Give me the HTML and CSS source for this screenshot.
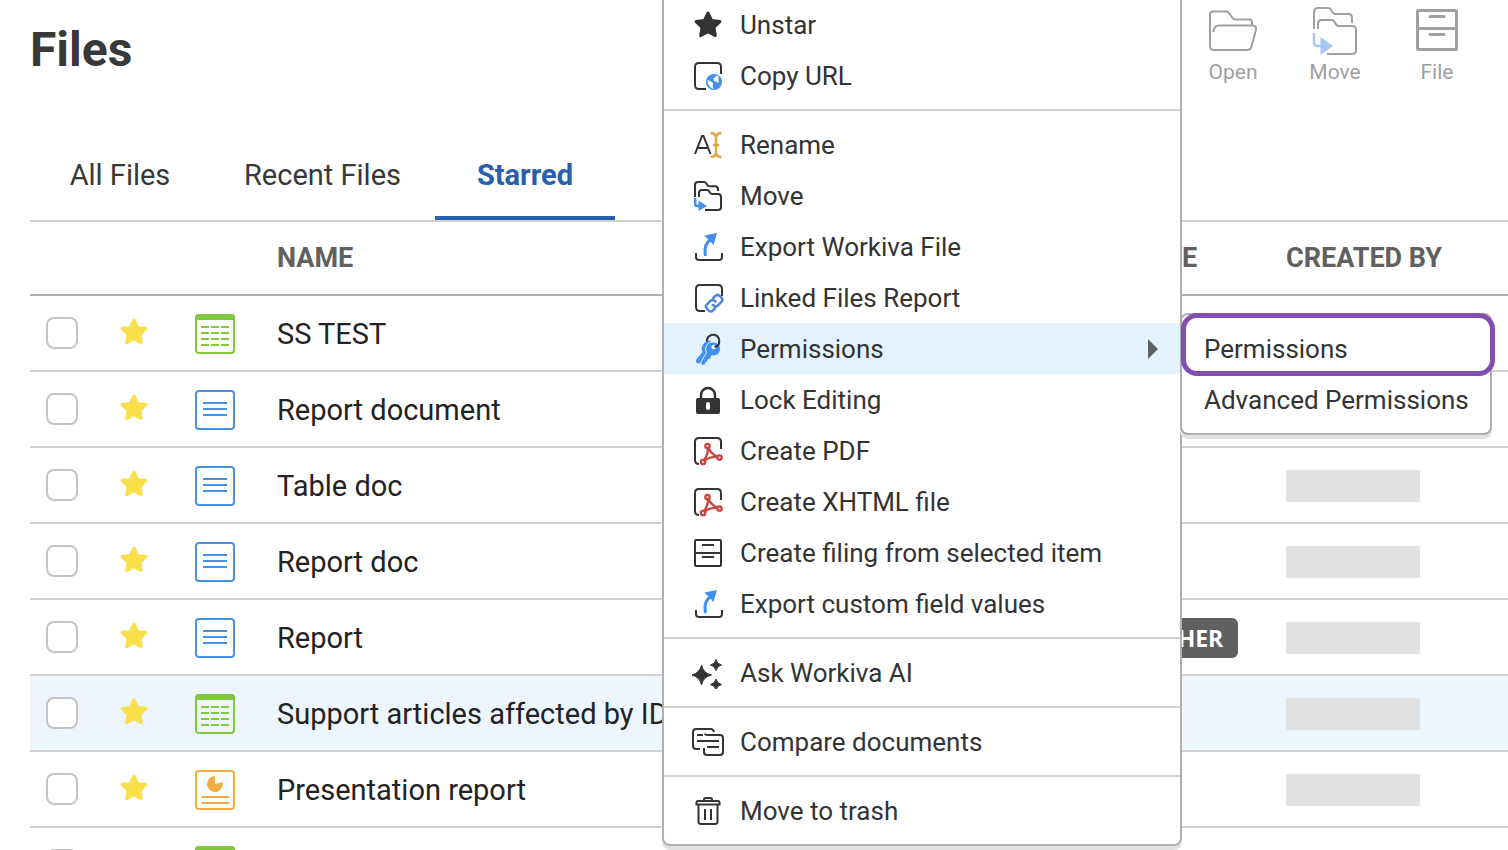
FILE: index.html
```html
<!DOCTYPE html>
<html lang="en">

<head>
  <meta charset="UTF-8">
  <meta name="viewport" content="width=device-width, initial-scale=1.0">
  <title>Files</title>
  <link rel="stylesheet" href="styles.css">
</head>
<body>

<!-- Icon set -->
<svg class="sprite" aria-hidden="true">
  <symbol id="star" viewBox="0 0 32 32">
    <path d="M16 4l3.600 7.500 8.300 1.100-6 5.800 1.450 8.200L16 22.700l-7.350 3.900 1.450-8.200-6-5.800 8.300-1.100z" fill="currentColor" stroke="currentColor" stroke-width="3" stroke-linejoin="round"/>
  </symbol>
  <symbol id="sheet" viewBox="0 0 40 40">
    <rect x="1" y="1" width="38" height="38" rx="3" fill="none" stroke="#80c83c" stroke-width="2"/>
    <path d="M0 6V3.500Q0 0 3.500 0h33Q40 0 40 3.500V6z" fill="#80c83c"/>
    <path d="M6 13h28M6 19h28M6 25h28M6 31h28" stroke="#80c83c" stroke-width="2" stroke-dasharray="8 2"/>
  </symbol>
  <symbol id="doc" viewBox="0 0 40 40">
    <rect x="1" y="1" width="38" height="38" rx="3" fill="none" stroke="#4a90e2" stroke-width="2"/>
    <path d="M8 13h24M8 19h24M8 25h24" stroke="#4a90e2" stroke-width="2"/>
  </symbol>
  <symbol id="slides" viewBox="0 0 40 40">
    <rect x="1" y="1" width="38" height="38" rx="3" fill="none" stroke="#eeae42" stroke-width="2"/>
    <path d="M20 14V6a8 8 0 1 0 7.700 6z" fill="#eeae42"/>
    <path d="M6 27h28M6 33h28" stroke="#eeae42" stroke-width="2"/>
  </symbol>
  <symbol id="open" viewBox="0 0 52 52">
    <path d="M45 21v-2.500q0-3-3-3H28.500q-2 0-3.500-2.200l-3-4.300Q21 7.500 19 7.500H6q-3 0-3 3V42q0 4 4 4h33q3.500 0 4.500-3.500l4.500-17q.500-4-3.500-4H12q-5 0-5.500 6.500" fill="none" stroke="currentColor" stroke-width="2"/>
  </symbol>
  <symbol id="move-big" viewBox="0 0 52 52">
    <path d="M5 25V8q0-4 4-4h10q2 0 3 1.800l1.500 2.400q1 1.800 3 1.800H39q4 0 4 4v5M9 25v-5q0-4 4-4h9.500q2 0 3 1.800l1.500 2.400q1 1.800 3 1.800H43q4 0 4 4v20q0 4-4 4H18" fill="none" stroke="currentColor" stroke-width="2"/>
    <path d="M5 29v10q0 3 3 3h5" fill="none" stroke="#a6c8f6" stroke-width="2.500"/>
    <path d="M11.500 33v18L24 42z" fill="#a6c8f6"/>
  </symbol>
  <symbol id="cabinet-big" viewBox="0 0 52 52">
    <path d="M7.500 6.500h37q1 0 1 1v37q0 1-1 1h-37q-1 0-1-1v-37q0-1 1-1zM6 24.500h40" fill="none" stroke="currentColor" stroke-width="3"/>
    <path d="M19 12.500h14M19 30.500h14" stroke="currentColor" stroke-width="3" stroke-linecap="round"/>
  </symbol>
  <symbol id="copy-url" viewBox="0 0 32 32">
    <path d="M29 14V7q0-4-4-4H7Q3 3 3 7v18q0 4 4 4h7" fill="none" stroke="currentColor" stroke-width="2"/>
    <circle cx="22" cy="22" r="8" fill="#4290ec"/>
    <path d="M15.500 19.500l3 2 3 1.500-1 2.500 1 3.500-3.500-2-2-3.500zM21.500 18.500l3.500-3 1.500 1v6.500l-2.500-1.500-2-.500z" fill="#fff"/>
  </symbol>
  <symbol id="rename" viewBox="0 0 32 32">
    <path d="M3 25L10 7h1.500l7 18M5.500 19h11" fill="none" stroke="currentColor" stroke-width="2"/>
    <path d="M18.500 4q5 0 5.500 4.500Q24.500 4 29.500 4M18.500 28q5 0 5.500-4.500.500 4.500 5.500 4.500M24 7v18M21 16h6" fill="none" stroke="#e2a646" stroke-width="2.500"/>
  </symbol>
  <symbol id="move" viewBox="0 0 32 32">
    <path d="M3 17V5q0-3 3-3h6q1.500 0 2.200 1.300l1 1.700q.800 1.300 2.300 1.300H23q3 0 3 3V11M7 17v-4q0-3 3-3h5q1.500 0 2.200 1.300l.800 1.400q.800 1.300 2.300 1.300H26q3 0 3 3v10q0 3-3 3H13" fill="none" stroke="currentColor" stroke-width="2"/>
    <path d="M3.200 18v6q0 2 2 2H9" fill="none" stroke="#4290ec" stroke-width="2.500"/>
    <path d="M6.500 20.500v10.500L15 26z" fill="#4290ec"/>
  </symbol>
  <symbol id="export" viewBox="0 0 32 32">
    <path d="M4 22v4q0 3 3 3h20q3 0 3-3v-4" fill="none" stroke="currentColor" stroke-width="2"/>
    <path d="M13.500 25C12 16 14 12 19 8" fill="none" stroke="#4290ec" stroke-width="3"/>
    <path d="M12.500 4.500L25 2l-3.500 12z" fill="#4290ec"/>
  </symbol>
  <symbol id="linked" viewBox="0 0 32 32">
    <path d="M30 14V7q0-4-4-4H8Q4 3 4 7v18q0 4 4 4h5" fill="none" stroke="currentColor" stroke-width="2"/>
    <g transform="rotate(-45 22 21)" fill="none" stroke="#4a86dc" stroke-width="2.500">
      <path d="M20 25.500h-4q-3 0-3-3v-2.500q0-3 3-3h5q3 0 3 3v2M24 17h4q3 0 3 3v2.500q0 3-3 3h-5q-3 0-3-3v-2"/>
    </g>
  </symbol>
  <symbol id="keys" viewBox="0 0 32 32">
    <path d="M15 9a6.200 6.200 0 1 1 11.500 2" fill="none" stroke="currentColor" stroke-width="2"/>
    <path d="M19 7.500Q12 8 10 13.500q-1 3 .500 5.500L4 27l.500 3 4 .500 2-4 5-8z" fill="#4290ec"/>
    <path d="M21.500 9a7 7 0 1 1-2 13.700L18.500 26l-2.500.500-.500 2.500-2 .500-.500 2.500-2.500.500L8.500 30l6-10.500A7 7 0 0 1 21.500 9z" fill="#4290ec" stroke="#e4f2fd" stroke-width="1"/>
    <circle cx="21.700" cy="14" r="2.300" fill="#e4f2fd"/>
    <path d="M22.500 13.800q4-.300 4.800-4.300" fill="none" stroke="currentColor" stroke-width="2"/>
  </symbol>
  <symbol id="lock" viewBox="0 0 32 32">
    <path d="M9 15v-4a7 7 0 0 1 14 0v4" fill="none" stroke="currentColor" stroke-width="2.500"/>
    <path d="M4 16q0-2 2-2h20q2 0 2 2v12q0 2-2 2H6q-2 0-2-2z" fill="currentColor"/>
    <rect x="14" y="18" width="4" height="8" rx="2" fill="#fff"/>
  </symbol>
  <symbol id="pdf" viewBox="0 0 32 32">
    <path d="M29 14V7q0-4-4-4H7Q3 3 3 7v18q0 4 4 4" fill="none" stroke="currentColor" stroke-width="2"/>
    <g fill="none" stroke="#c8443c" stroke-width="2.300">
      <circle cx="15.500" cy="11" r="2.200"/>
      <circle cx="11" cy="27" r="2.200"/>
      <circle cx="27.500" cy="22.500" r="2.200"/>
      <path d="M16 13q0 7-4 12M16.500 13q3 6.500 9 8.500M13 25.500q5-4 12.500-3.500"/>
    </g>
  </symbol>
  <symbol id="cabinet" viewBox="0 0 32 32">
    <rect x="3" y="3" width="26" height="26" rx="1" fill="none" stroke="currentColor" stroke-width="2"/>
    <path d="M3 16h26M10 8h12M10 20h12" stroke="currentColor" stroke-width="2"/>
  </symbol>
  <symbol id="sparkle" viewBox="0 0 32 32">
    <path d="M9.500 8Q11 16 19.500 18 11 20 9.500 28 8 20-.500 18 8 16 9.500 8zM24 2.500q1 4.500 5.500 5.500-4.500 1-5.500 5.500-1-4.500-5.500-5.500 4.500-1 5.500-5.500zM24 22q1 4.500 5.500 5.500Q25 28.500 24 33q-1-4.500-5.500-5.500Q23 26.500 24 22z" fill="currentColor" stroke="currentColor" stroke-width="1" stroke-linejoin="round"/>
  </symbol>
  <symbol id="compare" viewBox="0 0 32 32">
    <path d="M8 23H4q-3 0-3-3V6q0-3 3-3h15q2 0 3 3M12 22v4q0 3 3 3h13q3 0 3-3V12q0-3-3-3H16q-3 0-3-1.500" fill="none" stroke="currentColor" stroke-width="2"/>
    <path d="M5 9h6M5 15h22M15 21h12" stroke="currentColor" stroke-width="2"/>
  </symbol>
  <symbol id="trash" viewBox="0 0 32 32">
    <path d="M12 6V4.500Q12 3 13.500 3h5Q20 3 20 4.500V6M6 6h20q1.500 0 1.500 1.500v2H4.500v-2Q4.500 6 6 6zM6.500 10v16.500q0 2.500 2.500 2.500h14q2.500 0 2.500-2.500V10M13 14v11M19 14v11" fill="none" stroke="currentColor" stroke-width="2"/>
  </symbol>
</svg>

<div class="page">
  <header class="header">
    <h1>Files</h1>
    <div class="toolbar">
      <button class="tool"><svg><use href="#open"/></svg>Open</button>
      <button class="tool"><svg><use href="#move-big"/></svg>Move</button>
      <button class="tool"><svg><use href="#cabinet-big"/></svg>File</button>
    </div>
  </header>

  <nav class="tabs">
    <a href="#" class="tab">All Files</a>
    <a href="#" class="tab">Recent Files</a>
    <a href="#" class="tab active">Starred</a>
  </nav>

  <table class="files">
    <thead>
      <tr>
        <th class="col-check"></th>
        <th class="col-star"></th>
        <th class="col-icon"></th>
        <th>NAME</th>
        <th class="col-type">TYPE</th>
        <th class="col-created">CREATED BY</th>
      </tr>
    </thead>
    <tbody>
      <tr>
        <td class="col-check"><input type="checkbox" aria-label="Select SS TEST"></td>
        <td><svg class="star"><use href="#star"/></svg></td>
        <td><svg class="file-icon"><use href="#sheet"/></svg></td>
        <td>SS TEST</td>
        <td></td>
        <td><div class="placeholder"></div></td>
      </tr>
      <tr>
        <td class="col-check"><input type="checkbox" aria-label="Select Report document"></td>
        <td><svg class="star"><use href="#star"/></svg></td>
        <td><svg class="file-icon"><use href="#doc"/></svg></td>
        <td>Report document</td>
        <td></td>
        <td><div class="placeholder"></div></td>
      </tr>
      <tr>
        <td class="col-check"><input type="checkbox" aria-label="Select Table doc"></td>
        <td><svg class="star"><use href="#star"/></svg></td>
        <td><svg class="file-icon"><use href="#doc"/></svg></td>
        <td>Table doc</td>
        <td></td>
        <td><div class="placeholder"></div></td>
      </tr>
      <tr>
        <td class="col-check"><input type="checkbox" aria-label="Select Report doc"></td>
        <td><svg class="star"><use href="#star"/></svg></td>
        <td><svg class="file-icon"><use href="#doc"/></svg></td>
        <td>Report doc</td>
        <td></td>
        <td><div class="placeholder"></div></td>
      </tr>
      <tr>
        <td class="col-check"><input type="checkbox" aria-label="Select Report"></td>
        <td><svg class="star"><use href="#star"/></svg></td>
        <td><svg class="file-icon"><use href="#doc"/></svg></td>
        <td>Report</td>
        <td><span class="badge">OTHER</span></td>
        <td><div class="placeholder"></div></td>
      </tr>
      <tr class="selected">
        <td class="col-check"><input type="checkbox" aria-label="Select Support articles"></td>
        <td><svg class="star"><use href="#star"/></svg></td>
        <td><svg class="file-icon"><use href="#sheet"/></svg></td>
        <td>Support articles affected by ID</td>
        <td></td>
        <td><div class="placeholder"></div></td>
      </tr>
      <tr>
        <td class="col-check"><input type="checkbox" aria-label="Select Presentation report"></td>
        <td><svg class="star"><use href="#star"/></svg></td>
        <td><svg class="file-icon"><use href="#slides"/></svg></td>
        <td>Presentation report</td>
        <td></td>
        <td><div class="placeholder"></div></td>
      </tr>
      <tr>
        <td class="col-check"><input type="checkbox" aria-label="Select file"></td>
        <td><svg class="star"><use href="#star"/></svg></td>
        <td><svg class="file-icon"><use href="#sheet"/></svg></td>
        <td></td>
        <td></td>
        <td><div class="placeholder"></div></td>
      </tr>
    </tbody>
  </table>

  <!-- Context menu -->
  <div class="menu context-menu">
    <ul>
      <li><button><svg><use href="#star"/></svg>Unstar</button></li>
      <li><button><svg><use href="#copy-url"/></svg>Copy URL</button></li>
    </ul>
    <ul>
      <li><button><svg><use href="#rename"/></svg>Rename</button></li>
      <li><button><svg><use href="#move"/></svg>Move</button></li>
      <li><button><svg><use href="#export"/></svg>Export Workiva File</button></li>
      <li><button><svg><use href="#linked"/></svg>Linked Files Report</button></li>
      <li class="has-submenu">
        <button><svg><use href="#keys"/></svg>Permissions<span class="arrow"></span></button>
        <div class="menu submenu">
          <ul>
            <li class="highlight"><button>Permissions</button></li>
            <li><button>Advanced Permissions</button></li>
          </ul>
        </div>
      </li>
      <li><button><svg><use href="#lock"/></svg>Lock Editing</button></li>
      <li><button><svg><use href="#pdf"/></svg>Create PDF</button></li>
      <li><button><svg><use href="#pdf"/></svg>Create XHTML file</button></li>
      <li><button><svg><use href="#cabinet"/></svg>Create filing from selected item</button></li>
      <li><button><svg><use href="#export"/></svg>Export custom field values</button></li>
    </ul>
    <ul>
      <li><button><svg><use href="#sparkle"/></svg>Ask Workiva AI</button></li>
    </ul>
    <ul>
      <li><button><svg><use href="#compare"/></svg>Compare documents</button></li>
    </ul>
    <ul>
      <li><button><svg><use href="#trash"/></svg>Move to trash</button></li>
    </ul>
  </div>
</div>

</body>
</html>
```

FILE: styles.css
```css
* {
  box-sizing: border-box;
}

body {
  margin: 0;
  font-family: Roboto, Arial, sans-serif;
  font-size: 26px;
  color: #333;
  background-color: #fff;
}

button {
  font: inherit;
  color: inherit;
  background: none;
  border: none;
  padding: 0;
  cursor: pointer;
}

svg {
  display: block;
  flex: none;
  overflow: visible;
}

.sprite {
  position: absolute;
  width: 0;
  height: 0;
}

.page {
  position: relative;
  height: 100vh;
  padding-left: 30px;
  overflow: hidden;
}

/* Header */
.header {
  display: flex;
  justify-content: space-between;
  height: 130px;
  padding-right: 20px;
}

h1 {
  margin: 20px 0 0;
  font-size: 48px;
  line-height: 60px;
  font-weight: 700;
  color: #383838;
}

.toolbar {
  display: flex;
  align-items: flex-start;
}

.tool {
  display: flex;
  flex-direction: column;
  align-items: center;
  width: 102px;
  padding-top: 4px;
  font-size: 21px;
  line-height: 24px;
  color: #a0a0a0;
}

.tool svg {
  width: 52px;
  height: 52px;
  margin-bottom: 4px;
}

/* Tabs */
.tabs {
  display: flex;
  border-bottom: 2px solid #d2d2d2;
}

.tab {
  min-width: 180px;
  height: 90px;
  padding: 0 34px;
  border-bottom: 4px solid transparent;
  font-size: 29px;
  line-height: 90px;
  text-align: center;
  text-decoration: none;
  color: #383838;
}

.tab.active {
  border-color: #2860ae;
  font-weight: 700;
  color: #2860ae;
}

/* File table */
.files {
  width: 100%;
  table-layout: fixed;
  border-collapse: separate;
  border-spacing: 0;
  font-size: 29px;
  color: #222;
}

.files th,
.files td {
  height: 76px;
  padding: 2px 0 0;
  border-bottom: 2px solid #d2d2d2;
  text-align: left;
  white-space: nowrap;
}

.files th {
  height: 74px;
  padding: 0;
  border-color: #b0b0b0;
  font-size: 27px;
  font-weight: 700;
  color: #606060;
}

.files .col-check {
  width: 88px;
  padding: 0 0 0 16px;
}

.col-star {
  width: 77px;
}

.col-icon {
  width: 82px;
}

.col-type {
  width: 155px;
}

.col-created {
  width: 222px;
}

.selected {
  background-color: #edf5fe;
}

.files input {
  display: block;
  appearance: none;
  width: 32px;
  height: 32px;
  margin: 0;
  border: 2px solid #c4c4c4;
  border-radius: 8px;
  background-color: #fff;
}

.star {
  width: 32px;
  height: 32px;
  margin-bottom: 4px;
  color: #f9df4a;
}

.file-icon {
  width: 40px;
  height: 40px;
}

.badge {
  display: block;
  width: fit-content;
  padding: 0 15px;
  border-radius: 6px;
  font-family: "Open Sans", sans-serif;
  font-size: 23px;
  line-height: 40px;
  font-weight: 700;
  color: #fff;
  background-color: #606060;
}

.placeholder {
  width: 134px;
  height: 32px;
  border-radius: 2px;
  background-color: #e1e1e1;
}

/* Menus */
.menu {
  position: absolute;
  border: 2px solid #b0b0b0;
  border-radius: 8px;
  background-color: #fff;
  box-shadow: 0 4px 0 #e1e1e1;
}

.context-menu {
  top: -11px;
  left: 662px;
  width: 520px;
}

.submenu {
  top: -10px;
  left: 100%;
  width: 312px;
}

.menu ul {
  margin: 0;
  padding: 8px 0;
  list-style: none;
}

.menu ul + ul {
  border-top: 2px solid #d2d2d2;
}

.menu li {
  position: relative;
}

.menu button {
  display: flex;
  align-items: center;
  gap: 16px;
  width: 100%;
  height: 51px;
  padding: 0 22px 0 28px;
  white-space: nowrap;
}

.menu button svg {
  width: 32px;
  height: 32px;
}

.menu .submenu button {
  padding-left: 22px;
}

.has-submenu > button {
  background-color: #e4f2fd;
}

.arrow {
  margin-left: auto;
  border: 10px solid transparent;
  border-left-color: #606060;
  border-right: none;
}

.highlight::after {
  content: "";
  position: absolute;
  inset: -10px -5px -2px -1px;
  border: 5px solid #824fb0;
  border-radius: 16px;
}
```
